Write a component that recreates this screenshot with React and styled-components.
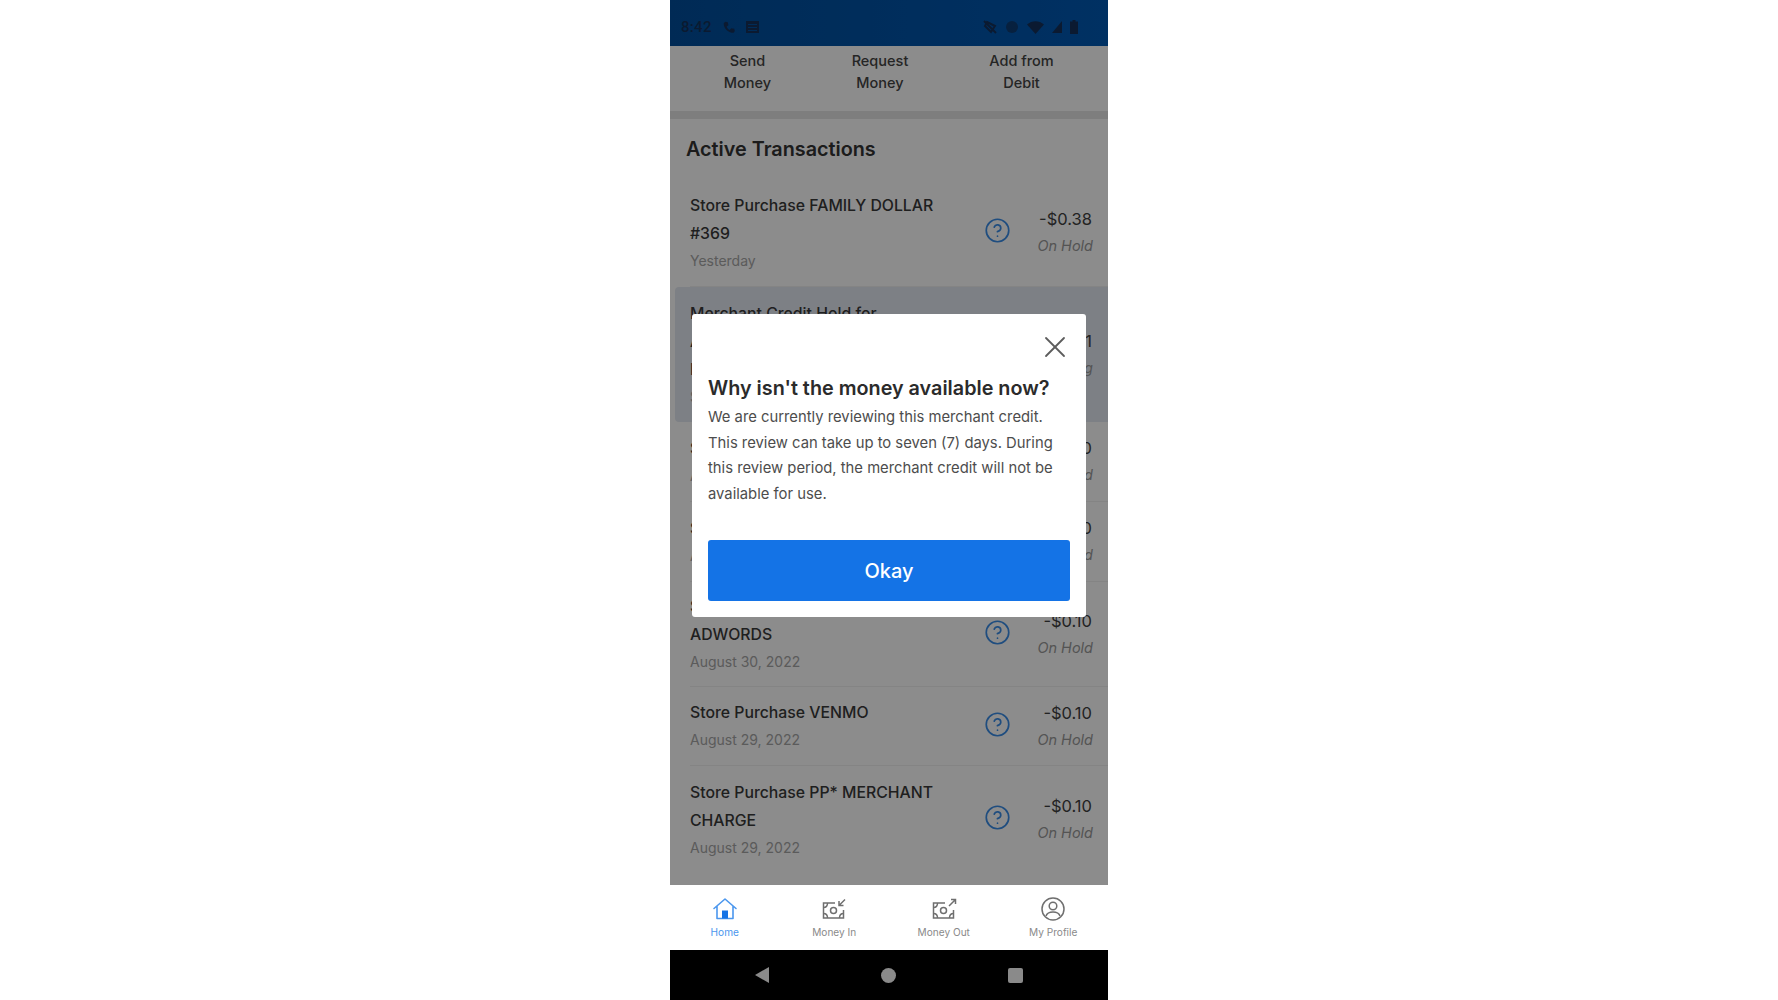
import React from 'react';
import styled, { createGlobalStyle } from 'styled-components';
import { CircleHelp, X } from 'lucide-react';

const GlobalStyle = createGlobalStyle`
  html, body { margin: 0; padding: 0; background: #fff; }
  body { font-family: Inter, "Open Sans", sans-serif; }
`;

const Phone = styled.div`
  width: 438px;
  height: 1000px;
  margin: 0 auto;
  display: flex;
  flex-direction: column;
  overflow: hidden;
`;

const Main = styled.main`
  position: relative;
  height: 885px;
  flex: none;
  overflow: hidden;
  background: #fff;
`;

const StatusBar = styled.div`
  height: 46px;
  box-sizing: border-box;
  padding: 8px 30px 0 11px;
  background: linear-gradient(90deg, #004e9c, #0059b4);
  display: flex;
  align-items: center;
  justify-content: space-between;
  color: #14315a;
`;

const StatusGroup = styled.div`
  display: flex;
  align-items: center;
  gap: ${(p) => p.$gap || 10}px;
`;

const Clock = styled.span`
  font: 500 15px Roboto, sans-serif;
  letter-spacing: 0.3px;
`;

const Actions = styled.div`
  height: 65px;
  display: grid;
  grid-template-columns: 155px 110px 173px;
  padding-top: 4px;
  box-sizing: border-box;
`;

const ActionLabel = styled.div`
  font-size: 14.5px;
  font-weight: 500;
  line-height: 22px;
  text-align: center;
  color: #444;
`;

const Divider = styled.div`
  height: 8px;
  background: #e6e6e6;
`;

const SectionTitle = styled.h2`
  margin: 0;
  padding: 17px 16px 0;
  height: 60px;
  box-sizing: border-box;
  font-size: 19.8px;
  line-height: 26px;
  font-weight: 600;
  color: #333;
`;

const Row = styled.div`
  height: ${(p) => p.$h}px;
  box-sizing: border-box;
  margin-left: ${(p) => (p.$active ? 5 : 20)}px;
  padding-left: ${(p) => (p.$active ? 15 : 0)}px;
  padding-right: 16px;
  display: flex;
  align-items: center;
  background: ${(p) => (p.$active ? '#e4e9f3' : 'transparent')};
  border-radius: ${(p) => (p.$active ? '4px 0 0 4px' : '0')};
  border-bottom: ${(p) => (p.$active || p.$last ? 'none' : '1px solid #f1f1f1')};
`;

const RowText = styled.div`
  width: 268px;
  flex: none;
`;

const RowTitle = styled.div`
  font-size: 15.8px;
  line-height: 28px;
  font-weight: 500;
  color: #3a3a3a;
`;

const RowDate = styled.div`
  font-size: 14px;
  line-height: 26px;
  color: #a6a6a6;
`;

const HelpIcon = styled(CircleHelp)`
  width: 27px;
  height: 27px;
  flex: none;
  margin: 0 0 4px 26px;
  color: #3a8de8;
`;

const Amount = styled.div`
  flex: 1;
  text-align: right;
  white-space: nowrap;
`;

const AmountValue = styled.div`
  font-size: 16.5px;
  line-height: 27px;
  color: #404040;
`;

const AmountState = styled.div`
  font-size: 14.5px;
  line-height: 26px;
  font-style: italic;
  color: #999;
  margin-right: -1px;
`;

const Scrim = styled.div`
  position: absolute;
  inset: 0;
  background: rgba(0, 0, 0, 0.45);
`;

const Modal = styled.div`
  position: absolute;
  left: 22px;
  top: 314px;
  width: 394px;
  height: 303px;
  box-sizing: border-box;
  padding: 16px 16px;
  background: #fff;
  border-radius: 3px;
`;

const CloseRow = styled.div`
  display: flex;
  justify-content: flex-end;
  height: 44px;
  color: #5c5c5c;
  margin: -1px -3px 0 0;
`;

const ModalTitle = styled.h3`
  margin: 0;
  font-size: 19.8px;
  line-height: 30px;
  font-weight: 600;
  color: #2b2b2b;
`;

const ModalBody = styled.p`
  margin: 2px 0 0;
  font-size: 14.8px;
  line-height: 25.6px;
  color: #4d4d4d;
`;

const OkayButton = styled.button`
  display: block;
  width: 100%;
  height: 61px;
  margin-top: 33px;
  border: none;
  border-radius: 3px;
  background: #1473e6;
  color: #fff;
  font: 500 20px Inter, sans-serif;
`;

const Nav = styled.nav`
  height: 65px;
  flex: none;
  background: #fff;
  display: grid;
  grid-template-columns: repeat(4, 1fr);
`;

const NavItem = styled.div`
  display: flex;
  flex-direction: column;
  align-items: center;
  padding-top: 11px;
  font-size: 10.1px;
  line-height: 14px;
  color: ${(p) => (p.$active ? '#4b97ee' : '#8a8a8a')};
`;

const NavIconBox = styled.svg`
  width: 26px;
  height: 26px;
  margin-bottom: 3px;
  display: block;
`;

const SystemBar = styled.div`
  height: 50px;
  flex: none;
  background: #000;
  display: flex;
  align-items: center;
  justify-content: center;
`;

const SystemButtons = styled.div`
  width: 268px;
  display: flex;
  align-items: center;
  justify-content: space-between;
`;

const HomeDot = styled.div`
  width: 15px;
  height: 15px;
  border-radius: 50%;
  background: #8a8a8a;
`;

const RecentSquare = styled.div`
  width: 15px;
  height: 15px;
  border-radius: 2px;
  background: #8a8a8a;
`;

const BackArrow = styled.div`
  width: 0;
  height: 0;
  border-top: 8px solid transparent;
  border-bottom: 8px solid transparent;
  border-right: 14px solid #8a8a8a;
`;

const MoneyIcon = ({ out }) => (
  <NavIconBox viewBox="0 0 26 26" fill="none" stroke="#6f6f6f" strokeWidth="1.5">
    <path d="M14 7H2.5v15h20v-8" />
    <path d="M2.5 11.500c2.500 0 4-1.500 4-4.500M2.500 17.500c2.500 0 4 1.500 4 4.500M22.500 17.500c-2.500 0-4 1.500-4 4.500" />
    <circle cx="12.500" cy="14.500" r="3" />
    {out ? <path d="M18 10l6-6M20 3.500h4.500V8" /> : <path d="M24 3.500l-6 6M18 5v4.500h4.500" />}
  </NavIconBox>
);

const HomeIcon = () => (
  <NavIconBox viewBox="0 0 26 26" fill="none">
    <path d="M2 12.500L13 3l11 9.500M5 10v12.500h16V10" stroke="#4b97ee" strokeWidth="1.6" strokeLinejoin="round" strokeLinecap="round" />
    <path d="M10 22.500v-8h6v8z" fill="#1473e6" />
  </NavIconBox>
);

const ProfileIcon = () => (
  <NavIconBox viewBox="0 0 26 26" fill="none" stroke="#6f6f6f" strokeWidth="1.5">
    <circle cx="13" cy="13" r="11" />
    <circle cx="13" cy="10" r="3.800" />
    <path d="M6 20c1-3 3-4 7-4s6 1 7 4" />
  </NavIconBox>
);

const transactions = [
  { h: 108, title: 'Store Purchase FAMILY DOLLAR #369', date: 'Yesterday', amount: '-$0.38', state: 'On Hold' },
  { h: 135, active: true, title: 'Merchant Credit Hold for AUTHORIZATION GOOGLE PAYMENT CORPORATION', date: 'September 1, 2022', amount: '$0.01', state: 'Pending' },
  { h: 80, title: 'Store Purchase AMAZON', date: 'August 31, 2022', amount: '-$0.10', state: 'On Hold' },
  { h: 80, title: 'Store Purchase CASH APP', date: 'August 31, 2022', amount: '-$0.10', state: 'On Hold' },
  { h: 105, title: 'Store Purchase GOOGLE ADWORDS', date: 'August 30, 2022', amount: '-$0.10', state: 'On Hold' },
  { h: 79, title: 'Store Purchase VENMO', date: 'August 29, 2022', amount: '-$0.10', state: 'On Hold' },
  { h: 107, title: 'Store Purchase PP* MERCHANT CHARGE', date: 'August 29, 2022', amount: '-$0.10', state: 'On Hold' },
];

const App = () => (
  <>
    <GlobalStyle />
    <Phone>
      <Main>
        <StatusBar>
          <StatusGroup>
            <Clock>8:42</Clock>
            <svg width="14" height="14" viewBox="0 0 24 24" fill="currentColor">
              <path d="M6 3l4 1 1 5-3 2c1 3 3 5 5 6l3-3 5 1 1 4-2 3C10 22 2 13 3 5z" />
            </svg>
            <svg width="13" height="12" viewBox="0 0 13 12" fill="currentColor">
              <path d="M0 0h13v12H0zM2 3v1h9V3zm0 3v1h9V6zm0 3v1h9V9z" fillRule="evenodd" />
            </svg>
          </StatusGroup>
          <StatusGroup $gap={8}>
            <svg width="14" height="14" viewBox="0 0 14 14" fill="none" stroke="currentColor" strokeWidth="2">
              <path d="M1 1l12 12M4 2l8 4-4 6-6-6z" />
            </svg>
            <svg width="14" height="14" viewBox="0 0 14 14" fill="currentColor">
              <circle cx="7" cy="7" r="6" opacity="0.7" />
            </svg>
            <svg width="17" height="13" viewBox="0 0 17 13" fill="currentColor">
              <path d="M0 3.500C4.500-1 12.500-1 17 3.500L8.500 13z" />
            </svg>
            <svg width="10" height="12" viewBox="0 0 10 12" fill="currentColor">
              <path d="M10 0v12H0z" />
            </svg>
            <svg width="8" height="14" viewBox="0 0 8 14" fill="currentColor">
              <path d="M2.500 0h3v1.500H8V14H0V1.500h2.500z" />
            </svg>
          </StatusGroup>
        </StatusBar>
        <Actions>
          <ActionLabel>Send<br />Money</ActionLabel>
          <ActionLabel>Request<br />Money</ActionLabel>
          <ActionLabel>Add from<br />Debit</ActionLabel>
        </Actions>
        <Divider />
        <SectionTitle>Active Transactions</SectionTitle>
        {transactions.map((t, i) => (
          <Row key={i} $h={t.h} $active={t.active} $last={i === transactions.length - 1}>
            <RowText>
              <RowTitle>{t.title}</RowTitle>
              <RowDate>{t.date}</RowDate>
            </RowText>
            <HelpIcon strokeWidth={1.5} />
            <Amount>
              <AmountValue>{t.amount}</AmountValue>
              <AmountState>{t.state}</AmountState>
            </Amount>
          </Row>
        ))}
        <Scrim />
        <Modal>
          <CloseRow>
            <X size={36} strokeWidth={1.2} />
          </CloseRow>
          <ModalTitle>Why isn't the money available now?</ModalTitle>
          <ModalBody>
            We are currently reviewing this merchant credit. This review can take up to seven (7) days. During this review period, the merchant credit will not be available for use.
          </ModalBody>
          <OkayButton>Okay</OkayButton>
        </Modal>
      </Main>
      <Nav>
        <NavItem $active><HomeIcon />Home</NavItem>
        <NavItem><MoneyIcon />Money In</NavItem>
        <NavItem><MoneyIcon out />Money Out</NavItem>
        <NavItem><ProfileIcon />My Profile</NavItem>
      </Nav>
      <SystemBar>
        <SystemButtons>
          <BackArrow />
          <HomeDot />
          <RecentSquare />
        </SystemButtons>
      </SystemBar>
    </Phone>
  </>
);

export default App;
